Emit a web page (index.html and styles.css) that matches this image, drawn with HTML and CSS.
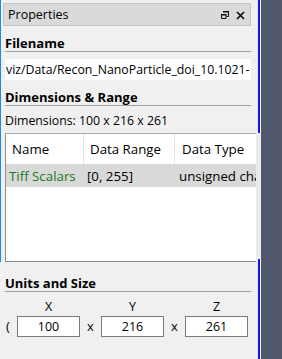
FILE: index.html
```
<!DOCTYPE html>
<html>
<head>
<meta charset="utf-8">
<link rel="stylesheet" href="styles.css">
</head>
<body>
<div class="screen">
  <div class="edge-left"></div>
  <div class="panel">
    <div class="titlebar">
      <span class="title">Properties</span>
      <span class="tb-icons">
        <svg class="ico" width="8" height="8" viewBox="0 0 8 8">
          <path d="M2.5 0.5h5v5h-2" fill="none" stroke="#111" stroke-width="1"/>
          <path d="M2 0h6v1.5H2z" fill="#111"/>
          <path d="M0.5 3.5h4.5v4H0.5z" fill="none" stroke="#111" stroke-width="1"/>
          <path d="M0 3h5.5v1.5H0z" fill="#111"/>
        </svg>
        <svg class="ico" width="9" height="9" viewBox="0 0 9 9">
          <path d="M1 1L8 8M8 1L1 8" stroke="#111" stroke-width="1.7"/>
        </svg>
      </span>
    </div>
    <div class="content">
      <div class="heading h-first">Filename</div>
      <div class="field">viz/Data/Recon_NanoParticle_doi_10.1021-</div>
      <div class="heading h-dim">Dimensions &amp; Range</div>
      <div class="dims">Dimensions: 100 x 216 x 261</div>
      <div class="table">
        <div class="thead">
          <div class="th c1">Name</div>
          <div class="th c2">Data Range</div>
          <div class="th c3">Data Type</div>
        </div>
        <div class="trow">
          <div class="td c1 green">Tiff Scalars</div>
          <div class="td c2">[0, 255]</div>
          <div class="td c3 t3">unsigned char</div>
        </div>
      </div>
      <div class="heading h-units">Units and Size</div>
      <div class="sizes">
        <div class="paren">(</div>
        <div class="axis">
          <div class="lbl">X</div>
          <div class="inp">100</div>
        </div>
        <div class="times">x</div>
        <div class="axis">
          <div class="lbl">Y</div>
          <div class="inp">216</div>
        </div>
        <div class="times">x</div>
        <div class="axis">
          <div class="lbl">Z</div>
          <div class="inp">261</div>
        </div>
      </div>
    </div>
  </div>
  <div class="gutter">
    <div class="blue b-top"></div>
    <div class="blue-gap"></div>
    <div class="blue b-bot"></div>
  </div>
  <div class="dark"></div>
</div>
</body>
</html>
```
FILE: styles.css
```
html, body {
  margin: 0;
  padding: 0;
  background: #50566c;
}
.screen {
  display: flex;
  width: 282px;
  height: 359px;
  overflow: hidden;
  font-family: "Open Sans", "Noto Sans", sans-serif;
  font-size: 12.3px;
  color: #000;
}
.edge-left {
  width: 1px;
  flex: none;
  background: linear-gradient(#1e88e5 0, #1e88e5 262px, #f0f0f0 262px);
}
.panel {
  width: 255px;
  flex: none;
  background: #f0f0f0;
  overflow: hidden;
}
.titlebar {
  margin: 3px 5px 0 2px;
  height: 21px;
  border: 1px solid #c4c4c4;
  background: #dadada;
  display: flex;
  align-items: center;
  justify-content: space-between;
  padding: 0 5px 0 4px;
}
.title {
  font-size: 12.5px;
}
.tb-icons {
  display: flex;
  align-items: center;
  gap: 7px;
  padding-top: 1px;
}
.ico { display: block; }
.content {
  margin: 0 5px 0 4px;
}
.heading {
  font-weight: 700;
  font-size: 13px;
  line-height: 16px;
  height: 16px;
  border-bottom: 1px solid #a0a0a0;
}
.h-first { margin-top: 9px; }
.h-dim { margin-top: 9px; }
.h-units { margin-top: 13px; }
.field {
  margin-top: 7px;
  height: 21px;
  line-height: 21px;
  background: #fff;
  padding-left: 1px;
  white-space: nowrap;
  overflow: hidden;
}
.dims {
  margin-top: 7px;
  line-height: 16px;
}
.table {
  margin-top: 4px;
  height: 127px;
  background: #fff;
  border-left: 1px solid #8a9099;
  border-top: 1px solid #a8acb3;
  border-bottom: 1px solid #80868f;
  width: 260px;
}
.thead, .trow {
  display: flex;
  white-space: nowrap;
}
.thead { height: 30px; }
.trow {
  height: 23px;
  background: #d9d9d9;
}
.th, .td {
  flex: none;
  display: flex;
  align-items: center;
}
.th {
  font-size: 13.3px;
  border-right: 1px solid #e4e4e4;
  padding-left: 6px;
  box-sizing: border-box;
}
.td {
  font-size: 13.3px;
  padding-left: 3px;
  box-sizing: border-box;
}
.c1 { width: 78px; }
.c2 { width: 91px; }
.c3 { width: 100px; }
.th.c3 { padding-left: 7px; }
.td.t3 { padding-left: 4px; }
.green { color: #217a21; }
.sizes {
  display: flex;
  align-items: flex-end;
  margin-top: 7px;
}
.paren {
  width: 12px;
  height: 21px;
  line-height: 21px;
  padding-left: 1px;
  box-sizing: border-box;
  font-size: 13px;
}
.axis {
  width: 63px;
  display: flex;
  flex-direction: column;
}
.lbl {
  text-align: center;
  line-height: 16px;
  height: 16px;
  font-size: 12.5px;
}
.inp {
  margin-top: 1px;
  height: 21px;
  box-sizing: border-box;
  border: 1px solid #7a7a7a;
  background: #fff;
  text-align: center;
  line-height: 19px;
  font-size: 12.5px;
}
.times {
  width: 21px;
  text-align: center;
  height: 21px;
  line-height: 21px;
  font-size: 13px;
}
.gutter {
  width: 5px;
  flex: none;
  background: #ebebeb;
  display: flex;
  flex-direction: column;
  align-items: flex-end;
}
.blue {
  width: 3px;
  border-left: 2px solid #1010e8;
  border-right: 1px solid #fff;
  box-sizing: border-box;
}
.b-top { height: 133px; }
.blue-gap { flex: 1; }
.b-bot { height: 100px; }
.dark {
  flex: 1;
  background: #50566c;
}
```
